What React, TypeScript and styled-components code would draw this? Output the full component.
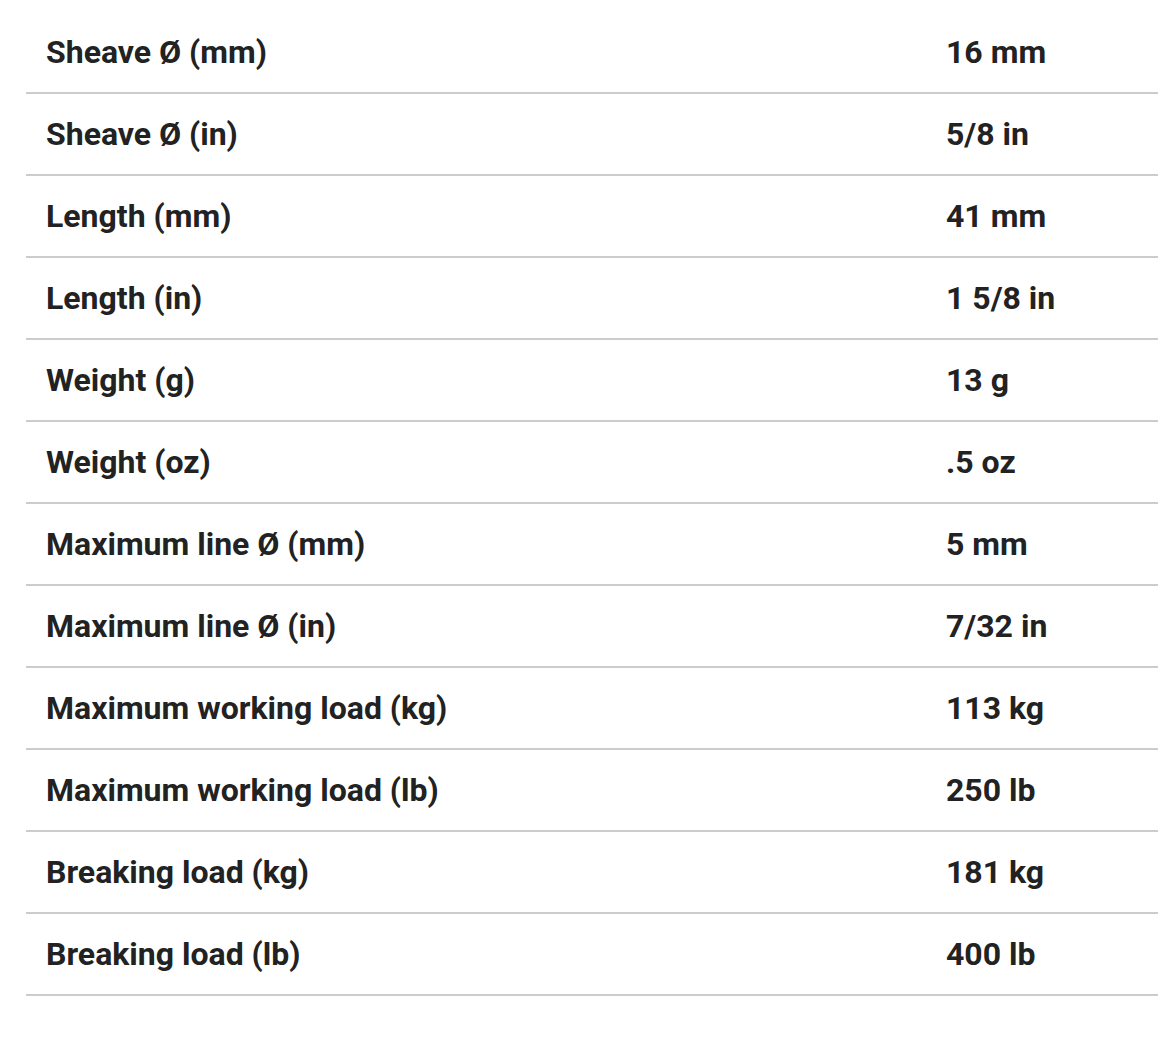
import React from 'react';
import styled, { createGlobalStyle } from 'styled-components';

const GlobalStyle = createGlobalStyle`
  html, body {
    margin: 0;
    padding: 0;
    background: #ffffff;
  }
  body {
    font-family: Roboto, "Liberation Sans", sans-serif;
  }
`;

const Page = styled.div`
  padding: 12px 0 0 26px;
  width: 1158px;
  box-sizing: border-box;
`;

const SpecTable = styled.div`
  display: flex;
  flex-direction: column;
`;

const SpecRow = styled.div`
  display: grid;
  grid-template-columns: 900px 1fr;
  height: 80px;
  align-items: center;
  border-bottom: 2px solid #cccccc;
`;

const Cell = styled.div`
  padding-left: 20px;
  font-size: 32px;
  font-weight: 700;
  color: #222222;
  line-height: 1;
`;

const specs: [string, string][] = [
  ['Sheave Ø (mm)', '16 mm'],
  ['Sheave Ø (in)', '5/8 in'],
  ['Length (mm)', '41 mm'],
  ['Length (in)', '1 5/8 in'],
  ['Weight (g)', '13 g'],
  ['Weight (oz)', '.5 oz'],
  ['Maximum line Ø (mm)', '5 mm'],
  ['Maximum line Ø (in)', '7/32 in'],
  ['Maximum working load (kg)', '113 kg'],
  ['Maximum working load (lb)', '250 lb'],
  ['Breaking load (kg)', '181 kg'],
  ['Breaking load (lb)', '400 lb'],
];

const App = () => {
  return (
    <Page>
      <GlobalStyle />
      <SpecTable>
        {specs.map(([label, value]) => (
          <SpecRow key={label}>
            <Cell>{label}</Cell>
            <Cell>{value}</Cell>
          </SpecRow>
        ))}
      </SpecTable>
    </Page>
  );
};

export default App;
